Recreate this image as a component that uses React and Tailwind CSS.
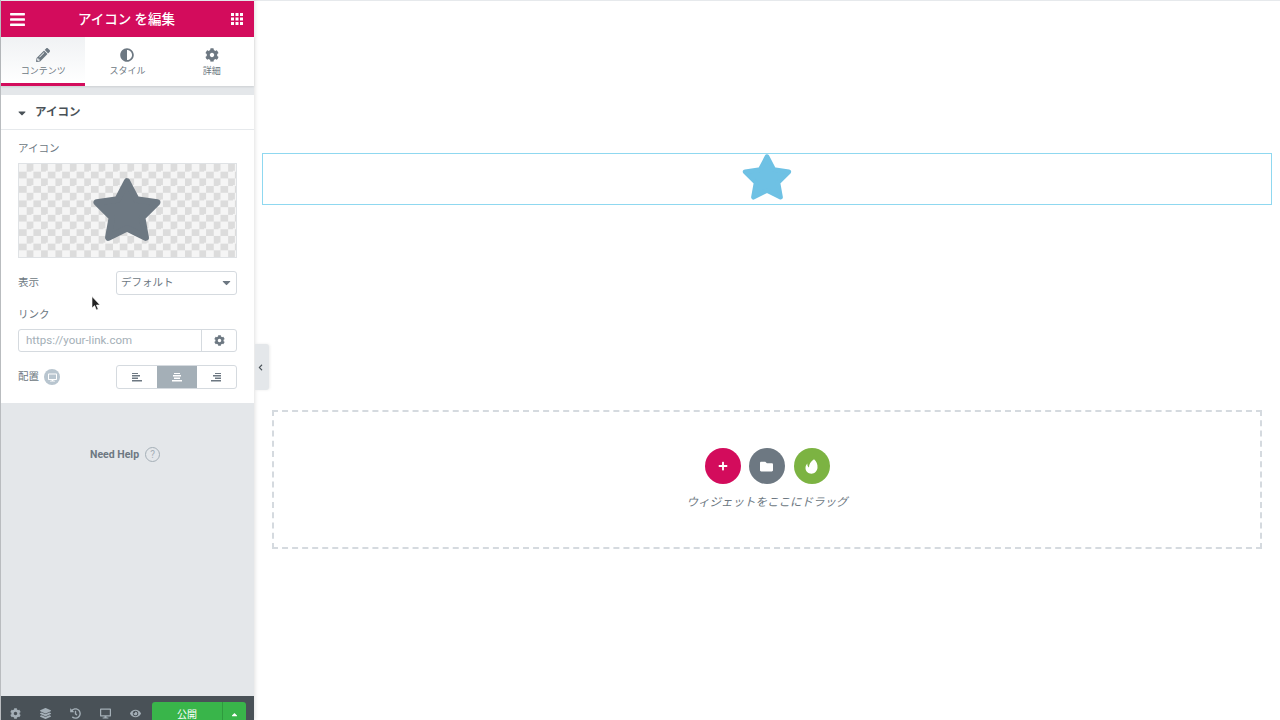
import React from "react";
import { FaBars, FaPencilAlt, FaAdjust, FaCog, FaCaretDown, FaCaretUp, FaLayerGroup, FaHistory, FaDesktop, FaEye, FaFolder, FaPlus, FaChevronLeft } from "react-icons/fa";

const font = { fontFamily: '"Roboto","Noto Sans CJK JP",sans-serif' };

function Star({ className, fill }) {
  return (
    <svg viewBox="0 0 100 100" className={className}>
      <polygon
        points="50,9 63,34 92,38 71,59 76,87 50,74 24,87 29,59 8,38 37,34"
        fill={fill}
        stroke={fill}
        strokeWidth="9"
        strokeLinejoin="round"
      />
    </svg>
  );
}

function Dots() {
  const c = [0, 4.5, 9];
  return (
    <svg width="12" height="12" viewBox="0 0 12 12" fill="#fff">
      {c.map((y) => c.map((x) => <rect key={`${x}-${y}`} x={x} y={y} width="3" height="3" />))}
    </svg>
  );
}

function Tab({ icon, label, active }) {
  return (
    <div className={`flex-1 flex flex-col items-center pt-[11px] h-[49px] border-b-[3px] ${active ? "border-[#d30c5c] bg-[linear-gradient(#f0f2f4,#ffffff)]" : "border-transparent"}`}>
      <div className="h-[14px] flex items-center text-[14px] text-[#6d7882]">{icon}</div>
      <div className="mt-[3px] text-[9px] leading-[12px] text-[#6d7882]">{label}</div>
    </div>
  );
}

function AlignIcon({ side }) {
  const x = (w) => (side === "left" ? 0 : side === "right" ? 10 - w : (10 - w) / 2);
  return (
    <svg width="10" height="9" viewBox="0 0 10 9" fill="currentColor">
      <rect x={x(6)} y="0" width="6" height="1" />
      <rect x={x(8)} y="2" width="8" height="1.5" />
      <rect x={x(6)} y="4.5" width="6" height="1.5" />
      <rect x={x(10)} y="7" width="10" height="1.5" />
    </svg>
  );
}

export default function App() {
  return (
    <div style={font} className="w-[1280px] h-[720px] overflow-hidden flex bg-white">
      <aside className="w-[254px] h-[720px] shrink-0 flex flex-col bg-[#e4e7ea] border-l border-[#b9bcbf] pt-px shadow-[1px_0_4px_rgba(0,0,0,0.12)] relative z-10">
        <header className="h-[36px] shrink-0 bg-[#d30c5c] text-white flex items-center justify-between pl-[8px] pr-[11px]">
          <FaBars className="text-[17px]" />
          <span className="mr-[4px] text-[13.5px] font-medium">アイコン を編集</span>
          <Dots />
        </header>
        <nav className="h-[49px] shrink-0 flex bg-white shadow-[0_1px_2px_rgba(0,0,0,0.1)]">
          <Tab active icon={<FaPencilAlt />} label="コンテンツ" />
          <Tab icon={<FaAdjust />} label="スタイル" />
          <Tab icon={<FaCog />} label="詳細" />
        </nav>
        <section className="mt-[9px] h-[308px] shrink-0 bg-white flex flex-col">
          <div className="h-[35px] shrink-0 pt-px border-b border-[#e6e9ec] flex items-center pl-[15px]">
            <FaCaretDown className="text-[12px] text-[#495157]" />
            <span className="ml-[7px] text-[11.5px] font-bold text-[#495157]">アイコン</span>
          </div>
          <div className="px-[17px] flex flex-col">
            <div className="mt-[12px] text-[10.5px] leading-[14px] text-[#6d7882]">アイコン</div>
            <div className="mt-[7px] h-[95px] border border-[#dfe2e5] flex items-center justify-center bg-[#f5f5f5] bg-[conic-gradient(#dcdcdc_25%,#f5f5f5_0_50%,#dcdcdc_0_75%,#f5f5f5_0)] bg-[length:14.4px_14.4px]">
              <Star className="w-[72px] h-[72px] -ml-[2px]" fill="#6d7882" />
            </div>
            <div className="mt-[13px] flex items-center justify-between h-[24px]">
              <span className="text-[10.5px] text-[#6d7882]">表示</span>
              <div className="w-[121px] h-[24px] border border-[#d5dadf] rounded-[3px] flex items-center justify-between pl-[4px] pr-[3px] text-[10.5px] text-[#6d7882]">
                <span>デフォルト</span>
                <FaCaretDown className="text-[13px] text-[#6d7882] -mt-[2px]" />
              </div>
            </div>
            <div className="mt-[13px] text-[10.5px] leading-[14px] text-[#6d7882]">リンク</div>
            <div className="mt-[7px] h-[23px] border border-[#d5dadf] rounded-[3px] flex items-center">
              <span className="flex-1 pl-[7px] text-[11.5px] text-[#a4afb7]">https://your-link.com</span>
              <div className="w-[35px] h-full border-l border-[#d5dadf] flex items-center justify-center text-[#6d7882] text-[11px]">
                <FaCog />
              </div>
            </div>
            <div className="mt-[13px] h-[24px] flex items-center justify-between">
              <div className="flex items-center gap-[5px]">
                <span className="text-[10.5px] text-[#6d7882]">配置</span>
                <span className="w-[16px] h-[16px] rounded-full bg-[#b8c5cf] flex items-center justify-center text-white text-[9px]">
                  <FaDesktop />
                </span>
              </div>
              <div className="w-[121px] h-[24px] border border-[#d5dadf] rounded-[3px] flex overflow-hidden">
                <div className="flex-1 flex items-center justify-center text-[#6d7882]"><AlignIcon side="left" /></div>
                <div className="w-[40px] flex items-center justify-center bg-[#a4afb7] text-white"><AlignIcon side="center" /></div>
                <div className="flex-1 flex items-center justify-center text-[#6d7882]"><AlignIcon side="right" /></div>
              </div>
            </div>
          </div>
        </section>
        <div className="mt-[44px] pl-[89px] flex items-center gap-[6px]">
          <span className="text-[10.5px] font-bold text-[#6d7882]">Need Help</span>
          <span className="w-[15px] h-[15px] rounded-full border border-[#a4afb7] flex items-center justify-center text-[10px] text-[#a4afb7] leading-none">?</span>
        </div>
        <footer className="mt-auto h-[24px] shrink-0 overflow-hidden bg-[#495157] flex items-start text-[#a4afb7] text-[11px]">
          <div className="w-[151px] h-[24px] mt-[5px] flex items-center justify-between pl-[9px] pr-[11px]">
            <FaCog />
            <FaLayerGroup />
            <FaHistory />
            <FaDesktop />
            <FaEye />
          </div>
          <div className="h-[24px] mt-[6px] flex rounded-t-[3px] overflow-hidden text-white">
            <div className="w-[71px] bg-[#39b54a] flex items-center justify-center text-[10px] border-r border-[#2f9a3e]">公開</div>
            <div className="w-[23px] bg-[#39b54a] flex items-center justify-center text-[9px]"><FaCaretUp /></div>
          </div>
        </footer>
        <div className="absolute left-[254px] top-[344px] w-[14px] h-[46px] bg-[#e4e7ea] rounded-r-[3px] flex items-center justify-center text-[#495157] text-[7px] shadow-[1px_0_3px_rgba(0,0,0,0.08)]">
          <FaChevronLeft className="-ml-[3px]" />
        </div>
      </aside>
      <main className="flex-1 border-t border-[#e6e9ec] flex flex-col pl-[8px] pr-[8px]">
        <div className="mt-[152px] h-[52px] border border-[#8fd8f0] flex items-center justify-center">
          <Star className="w-[52px] h-[52px] -mt-[3px]" fill="#6ec1e4" />
        </div>
        <div className="mt-[205px] mx-[10px] h-[139px] border-2 border-dashed border-[#d5dadf] flex flex-col items-center">
          <div className="mt-[36px] flex">
            <span className="w-[36px] h-[36px] rounded-full bg-[#d30c5c] flex items-center justify-center text-white text-[10px]"><FaPlus /></span>
            <span className="ml-[8px] w-[36px] h-[36px] rounded-full bg-[#6d7882] flex items-center justify-center text-white text-[13px]"><FaFolder /></span>
            <span className="ml-[9px] w-[36px] h-[36px] rounded-full bg-[#7cb342] flex items-center justify-center">
              <svg width="13" height="15" viewBox="0 0 13 15" fill="#fff"><path d="M9 0.3C11.5 2.5 12.8 5.5 12.5 8.8C12.2 12.2 9.6 14.7 6.4 14.7C3 14.7 0.5 12.2 0.5 9C0.5 7.2 1.2 5.6 2.4 4.4C2.2 6.2 2.8 7.6 4 8.4C3.8 5.4 5.8 2.6 9 0.3Z" /></svg>
            </span>
          </div>
          <div className="mt-[10px] text-[11.5px] leading-[16px] italic text-[#6d7882]">ウィジェットをここにドラッグ</div>
        </div>
      </main>
      <svg className="absolute left-[91px] top-[296px] z-20" width="10" height="16" viewBox="0 0 10 16">
        <path d="M1 0.5V12L3.6 9.6L5.4 14L7.2 13.2L5.4 9H9Z" fill="#222" stroke="#fff" strokeWidth="0.6" />
      </svg>
    </div>
  );
}
